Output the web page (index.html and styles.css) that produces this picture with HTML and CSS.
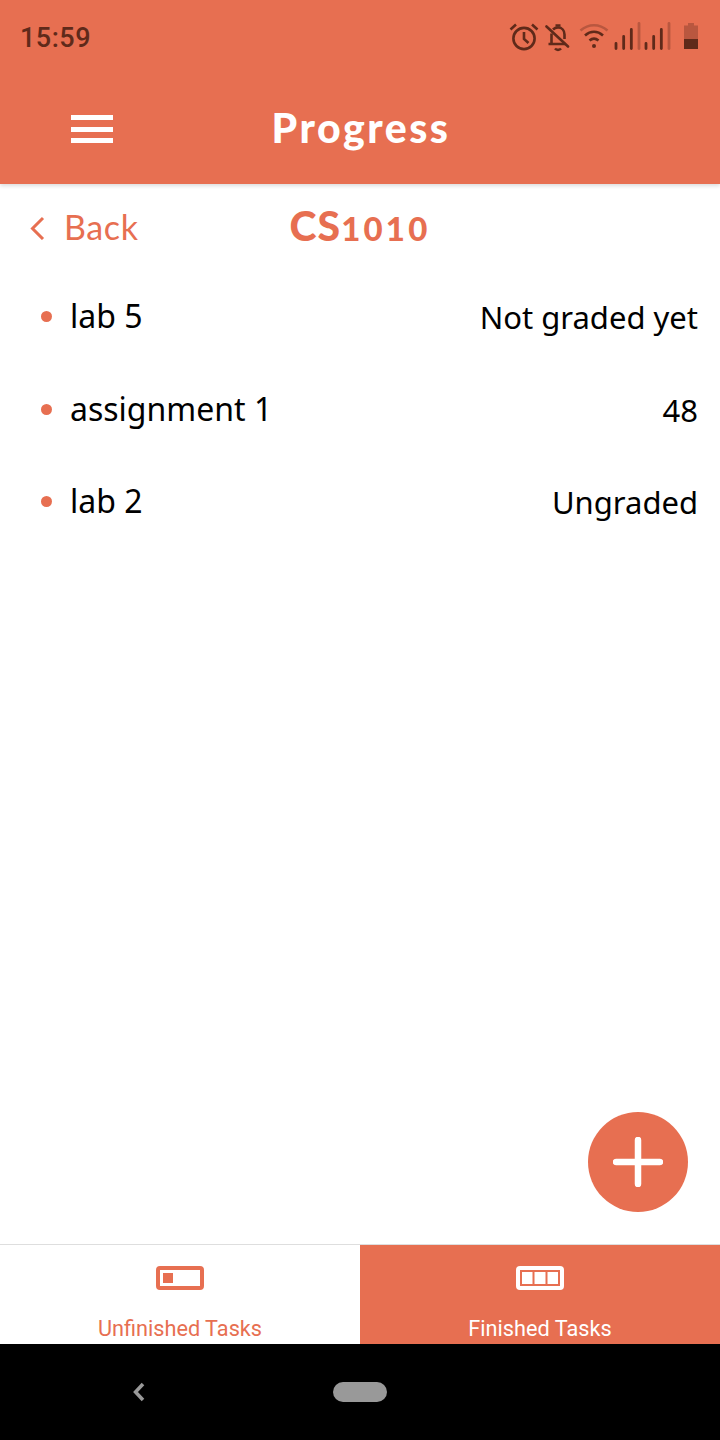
FILE: index.html
```html
<!DOCTYPE html>
<html lang="en">
<head>
<meta charset="utf-8">
<title>Progress</title>
<link rel="stylesheet" href="styles.css">
</head>
<body>
<div class="app">
  <header class="top">
    <div class="status">
      <span class="time">15:59</span>
      <div class="status-icons">
        <svg class="ic-alarm" width="30" height="30" viewBox="0 0 30 30" fill="none" stroke="#5f2a1a" stroke-width="2.6"><circle cx="15" cy="16.500" r="10.600"/><path d="M15 10v7l4.500 4M1.500 7.500 7 2.500M28.500 7.500 23 2.500"/></svg>
        <svg class="ic-bell" width="26" height="30" viewBox="0 0 26 30" fill="none" stroke="#5f2a1a" stroke-width="2.6"><path d="M6.500 11.500v10.500H3.500M6.500 22h14M8 7.500C9.500 6 11 5.500 13 5.500c4 0 6.500 3 6.500 7V17"/><path d="M1.500 4.500 23 24.500" stroke-linecap="round"/><path d="M10.500 3.500h5M10 26.500c1.500 1.800 4.500 1.800 6 0"/></svg>
        <svg class="ic-wifi" width="30" height="28" viewBox="0 0 30 28" fill="none" stroke-width="2.600"><path d="M1.500 9.500c8-7 19-7 27 0" stroke="#b9573f"/><path d="M6 14.500c5.500-5 12.500-5 18 0M10.500 19.500c2.800-2.400 6.200-2.400 9 0" stroke="#5f2a1a"/><circle cx="15" cy="25" r="2" fill="#5f2a1a"/></svg>
        <svg class="ic-signal" width="28" height="30" viewBox="0 0 28 30" stroke-width="2.800" stroke-linecap="round"><path d="M2 27.600v-5.200M9.670 27.600V15.400M17.330 27.600V8.400" stroke="#5f2a1a"/><path d="M25 27.600V2.400" stroke="#b9573f"/></svg>
        <svg class="ic-signal ic-signal-last" width="28" height="30" viewBox="0 0 28 30" stroke-width="2.800" stroke-linecap="round"><path d="M2 27.600v-5.200M9.670 27.600V15.400M17.330 27.600V8.400" stroke="#5f2a1a"/><path d="M25 27.600V2.400" stroke="#b9573f"/></svg>
        <svg class="ic-batt" width="14" height="26" viewBox="0 0 14 26"><path d="M4 0h6v2.500h4V16H0V2.500h4z" fill="#b9573f"/><path d="M0 16h14v10H0z" fill="#5f2a1a"/></svg>
      </div>
    </div>
    <div class="bar">
      <div class="burger"><span></span><span></span><span></span></div>
      <h1 class="title">Progress</h1>
    </div>
  </header>

  <main class="content">
    <div class="subhead">
      <div class="back">
        <svg width="16" height="24" viewBox="0 0 16 24" fill="none" stroke="#e76f51" stroke-width="3"><path d="M14 2 3.500 12.500 14 23"/></svg>
        <span class="back-label">Back</span>
      </div>
      <h2 class="course">CS<span class="num">1010</span></h2>
    </div>
    <ul class="tasks">
      <li class="task"><span class="dot"></span><span class="name">lab 5</span><span class="grade">Not graded yet</span></li>
      <li class="task"><span class="dot"></span><span class="name">assignment 1</span><span class="grade">48</span></li>
      <li class="task"><span class="dot"></span><span class="name">lab 2</span><span class="grade">Ungraded</span></li>
    </ul>
    <button class="fab" type="button" aria-label="Add">
      <svg width="50" height="50" viewBox="0 0 50 50" stroke="#fff" stroke-width="6.500" stroke-linecap="round"><path d="M25 3v44M3 25h44"/></svg>
    </button>
  </main>

  <nav class="tabs">
    <div class="tab">
      <svg width="48" height="24" viewBox="0 0 48 24"><rect x="2" y="2" width="44" height="20" rx="2" fill="none" stroke="#e76f51" stroke-width="4"/><rect x="7" y="7" width="10" height="10" fill="#e76f51"/></svg>
      <span>Unfinished Tasks</span>
    </div>
    <div class="tab tab-active">
      <svg width="48" height="24" viewBox="0 0 48 24"><rect width="48" height="24" rx="4" fill="#fff"/><g fill="none" stroke="#e76f51" stroke-width="2"><rect x="5" y="5" width="38" height="14"/><path d="M17.500 5v14M30.500 5v14"/></g></svg>
      <span>Finished Tasks</span>
    </div>
  </nav>

  <footer class="sysnav">
    <svg class="sys-back" width="14" height="20" viewBox="0 0 14 20" fill="none" stroke="#999" stroke-width="3.500"><path d="M11 2 3.500 10l7.500 8"/></svg>
    <span class="pill"></span>
  </footer>
</div>
</body>
</html>
```

FILE: styles.css
```css
* { box-sizing: border-box; }
html, body { margin: 0; padding: 0; }
body { background: #fff; font-family: "Noto Sans", sans-serif; }
.app { width: 720px; height: 1440px; display: flex; flex-direction: column; overflow: hidden; }

.top { height: 184px; background: #e76f51; box-shadow: 0 2px 4px rgba(0,0,0,.14); position: relative; z-index: 1; flex: none; }
.status { height: 72px; padding: 21px 22px 0 20px; display: flex; justify-content: space-between; align-items: flex-start; }
.time { font: 500 27px/34px Roboto, sans-serif; color: #5f2a1a; letter-spacing: .5px; }
.status-icons { display: flex; align-items: flex-start; }
.ic-alarm { margin-right: 6px; margin-top: 1px; }
.ic-bell { margin-right: 8px; margin-top: 1px; }
.ic-wifi { margin-right: 5px; }
.ic-signal { margin-right: 2px; }
.ic-signal-last { margin-right: 12px; }
.ic-batt { margin-top: 2px; }

.bar { height: 112px; position: relative; display: flex; align-items: center; justify-content: center; }
.burger { position: absolute; left: 71px; top: 43px; width: 42px; display: flex; flex-direction: column; gap: 6.500px; }
.burger span { display: block; height: 5px; background: #fff; }
.title { margin: -1px 0 0 2px; font: 900 41px/48px Lato, sans-serif; color: #fff; letter-spacing: 2.500px; }

.content { flex: 1; position: relative; }
.subhead { height: 86.500px; position: relative; display: flex; align-items: flex-start; justify-content: center; padding-top: 20px; }
.back { position: absolute; left: 29px; top: 26px; display: flex; align-items: center; gap: 19px; font: 400 34px/36px Lato, sans-serif; letter-spacing: .6px; color: #e76f51; }
.back-label { position: relative; top: -1px; }
.course { margin: 0; font: 900 41px/44px Lato, sans-serif; letter-spacing: 1px; color: #e76f51; }
.num { font-size: 33px; letter-spacing: 3.200px; }

.tasks { list-style: none; margin: 0; padding: 0; }
.task { height: 92.500px; display: flex; align-items: center; padding: 0 22px 0 41px; font-size: 32px; color: #000; }
.dot { width: 11px; height: 11px; border-radius: 50%; background: #e76f51; margin-right: 18px; flex: none; }
.name { flex: 1; position: relative; top: -1px; }
.grade { position: relative; top: .5px; font-size: 31px; }

.fab { position: absolute; left: 588px; top: 928px; width: 100px; height: 100px; border: 0; padding: 0; border-radius: 50%; background: #e76f51; display: flex; align-items: center; justify-content: center; }

.tabs { height: 100px; display: flex; border-top: 1px solid #dedede; flex: none; }
.tab { flex: 1; display: flex; flex-direction: column; align-items: center; padding-top: 21px; color: #e76f51; font: 400 21.700px/26px Roboto, sans-serif; }
.tab svg { margin-bottom: 26px; }
.tab-active { background: #e76f51; color: #fff; }

.sysnav { height: 96px; background: #000; position: relative; flex: none; }
.sys-back { position: absolute; left: 132px; top: 38px; }
.pill { position: absolute; left: 333px; top: 38px; width: 54px; height: 20px; border-radius: 10px; background: #999; }
```
